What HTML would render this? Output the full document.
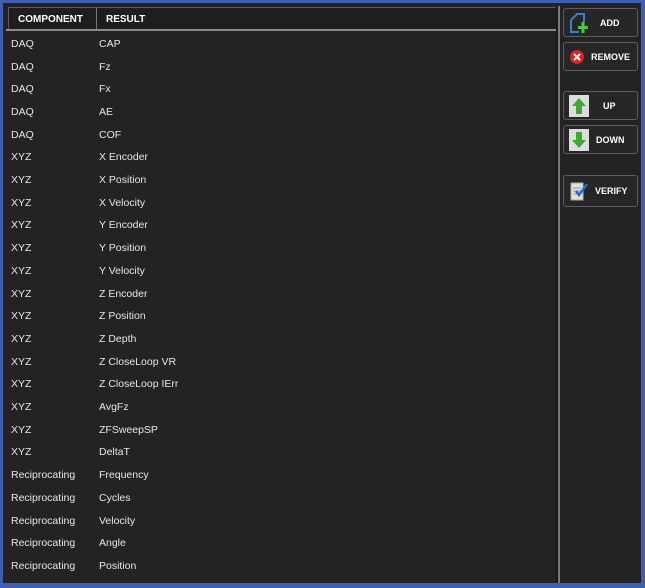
<!DOCTYPE html>
<html><head><style>
*{margin:0;padding:0;box-sizing:border-box}
body{width:645px;height:588px;background:#3d5fb0;position:relative;overflow:hidden;font-family:"Liberation Sans",sans-serif}
#main{position:absolute;left:3px;top:3px;width:638px;height:580px;background:#232323}
#hdr{position:absolute;left:5px;top:4px;width:551px;height:24px;border:1px solid #5a5a5a;border-bottom:none;background:#1e1e1e}
#hdr span{position:absolute;top:6px;color:#fff;font-weight:bold;font-size:10px}
#hsep{position:absolute;left:87px;top:0;width:1px;height:23px;background:#777}
#hline{position:absolute;left:3px;top:26px;width:553px;height:2px;background:#8a8a8a}
#vsep{position:absolute;left:555px;top:3px;width:2px;height:577px;background:#7a7a7a}
#vsep2{position:absolute;left:553px;top:3px;width:2px;height:577px;background:#1a1a1a}
.r{position:absolute;left:8px;color:#e6e6e6;font-size:10.5px;height:14px}
.r b{font-weight:normal;position:absolute;left:88px;white-space:nowrap}
.btn{position:absolute;left:560px;width:75px;border:1px solid #5e5e5e;border-radius:3px;background:#262626;color:#fff;font-weight:bold;font-size:9px}
.btn span{position:absolute;top:50%;transform:translateY(-50%)}
.ic{position:absolute;top:50%;transform:translateY(-50%);left:5px}
</style></head><body>
<div id="main">
<div id="hdr"><span style="left:9px">COMPONENT</span><div id="hsep"></div><span style="left:97px">RESULT</span></div>
<div id="hline"></div>
<div id="vsep2"></div><div id="vsep"></div>
<div class="r" style="top:35px">DAQ<b>CAP</b></div>
<div class="r" style="top:58px">DAQ<b>Fz</b></div>
<div class="r" style="top:80px">DAQ<b>Fx</b></div>
<div class="r" style="top:103px">DAQ<b>AE</b></div>
<div class="r" style="top:126px">DAQ<b>COF</b></div>
<div class="r" style="top:148px">XYZ<b>X Encoder</b></div>
<div class="r" style="top:171px">XYZ<b>X Position</b></div>
<div class="r" style="top:194px">XYZ<b>X Velocity</b></div>
<div class="r" style="top:216px">XYZ<b>Y Encoder</b></div>
<div class="r" style="top:239px">XYZ<b>Y Position</b></div>
<div class="r" style="top:262px">XYZ<b>Y Velocity</b></div>
<div class="r" style="top:285px">XYZ<b>Z Encoder</b></div>
<div class="r" style="top:307px">XYZ<b>Z Position</b></div>
<div class="r" style="top:330px">XYZ<b>Z Depth</b></div>
<div class="r" style="top:353px">XYZ<b>Z CloseLoop VR</b></div>
<div class="r" style="top:375px">XYZ<b>Z CloseLoop IErr</b></div>
<div class="r" style="top:398px">XYZ<b>AvgFz</b></div>
<div class="r" style="top:421px">XYZ<b>ZFSweepSP</b></div>
<div class="r" style="top:443px">XYZ<b>DeltaT</b></div>
<div class="r" style="top:466px">Reciprocating<b>Frequency</b></div>
<div class="r" style="top:489px">Reciprocating<b>Cycles</b></div>
<div class="r" style="top:512px">Reciprocating<b>Velocity</b></div>
<div class="r" style="top:534px">Reciprocating<b>Angle</b></div>
<div class="r" style="top:557px">Reciprocating<b>Position</b></div>

<div class="btn" style="top:5px;height:29px">
<svg class="ic" width="20" height="22" viewBox="0 0 20 22"><path d="M2 8 L8 2 H15 V10 M2 8 V20 H10" fill="none" stroke="#3a7fd0" stroke-width="2"/><path d="M14 10 V21 M9 15.5 H19" stroke="#3fd040" stroke-width="3"/></svg>
<span style="left:36px">ADD</span></div>
<div class="btn" style="top:39px;height:29px">
<svg class="ic" width="16" height="16" viewBox="0 0 16 16"><circle cx="8" cy="8" r="7" fill="#d22"/><path d="M5 5 L11 11 M11 5 L5 11" stroke="#fff" stroke-width="2"/></svg>
<span style="left:27px">REMOVE</span></div>
<div class="btn" style="top:88px;height:29px">
<svg class="ic" width="20" height="22" viewBox="0 0 20 22"><rect x="0" y="0" width="20" height="22" fill="#ddd"/><path d="M10 3 L17 11 H13 V19 H7 V11 H3 Z" fill="#3caa2e"/></svg>
<span style="left:39px">UP</span></div>
<div class="btn" style="top:122px;height:29px">
<svg class="ic" width="20" height="22" viewBox="0 0 20 22"><rect x="0" y="0" width="20" height="22" fill="#ddd"/><path d="M10 19 L17 11 H13 V3 H7 V11 H3 Z" fill="#3caa2e"/></svg>
<span style="left:32px">DOWN</span></div>
<div class="btn" style="top:172px;height:32px">
<svg class="ic" width="20" height="22" viewBox="0 0 20 22"><path d="M2 3 H14 V20 H2 Z" fill="#e8e2c8" stroke="#aab" /><path d="M4 8 H12 M4 11 H12 M4 14 H10" stroke="#7797c7"/><path d="M7 11 L10 15 L18 4" fill="none" stroke="#2a6ad0" stroke-width="2.5"/></svg>
<span style="left:31px">VERIFY</span></div>
</div>
</body></html>
